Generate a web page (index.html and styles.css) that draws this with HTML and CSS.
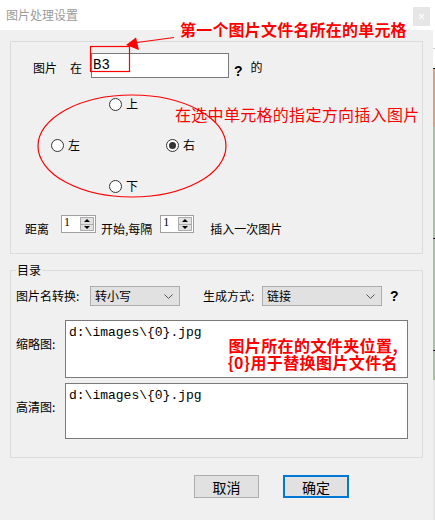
FILE: index.html
```html
<!DOCTYPE html>
<html>
<head>
    <title>图片处理设置</title>
    <link rel="stylesheet" href="styles.css">
</head>
<body>
    <div class="window">
        <div class="titlebar">
            <span class="title">图片处理设置</span>
            <span class="close">×</span>
        </div>

        <!-- 插入位置 -->
        <div class="group group-pos">
            <div class="pos-row">
                <span class="lbl lbl-pic">图片</span>
                <span class="lbl lbl-at">在</span>
                <div class="cell-input">B3</div>
                <span class="help">?</span>
                <span class="lbl lbl-of">的</span>
            </div>

            <div class="dir">
                <label class="radio dir-up"><span class="dot"></span>上</label>
                <label class="radio dir-left"><span class="dot"></span>左</label>
                <label class="radio dir-right"><span class="dot checked"></span>右</label>
                <label class="radio dir-down"><span class="dot"></span>下</label>
            </div>

            <div class="spin-row">
                <span class="lbl">距离</span>
                <div class="spin spin-a">
                    <span class="spin-val">1</span>
                    <span class="spin-btns"><i class="up"></i><i class="down"></i></span>
                </div>
                <span class="lbl lbl-start">开始,每隔</span>
                <div class="spin spin-b">
                    <span class="spin-val">1</span>
                    <span class="spin-btns"><i class="up"></i><i class="down"></i></span>
                </div>
                <span class="lbl lbl-once">插入一次图片</span>
            </div>
        </div>

        <!-- 目录 -->
        <fieldset class="group group-dir">
            <legend>目录</legend>
            <div class="sel-row">
                <span class="lbl lbl-conv">图片名转换:</span>
                <div class="select sel-case">转小写<svg class="chev" width="9" height="5"><polyline points="0.5,0.5 4.5,4.5 8.5,0.5" /></svg></div>
                <span class="lbl lbl-mode">生成方式:</span>
                <div class="select sel-mode">链接<svg class="chev" width="9" height="5"><polyline points="0.5,0.5 4.5,4.5 8.5,0.5" /></svg></div>
                <span class="help help-mode">?</span>
            </div>

            <div class="path-row">
                <span class="lbl path-lbl">缩略图:</span>
                <div class="path-box path-thumb">
                    d:\images\{0}.jpg
                    <div class="note note-path">图片所在的文件夹位置,<br>{0}用于替换图片文件名</div>
                </div>
            </div>

            <div class="path-row path-row-hd">
                <span class="lbl path-lbl">高清图:</span>
                <div class="path-box path-hd">d:\images\{0}.jpg</div>
            </div>
        </fieldset>

        <div class="buttons">
            <button class="btn">取消</button>
            <button class="btn btn-ok">确定</button>
        </div>

        <!-- red annotations -->
        <div class="note note-cell">第一个图片文件名所在的单元格</div>
        <div class="note note-dir">在选中单元格的指定方向插入图片</div>
        <svg class="marks" width="433" height="520">
            <rect x="90.5" y="46.5" width="39" height="25" />
            <line x1="174" y1="37.5" x2="137" y2="42.5" />
            <polygon class="head" points="126,45 136,37.5 139,50" />
            <ellipse cx="132" cy="146" rx="94" ry="51" />
        </svg>
    </div>
    <div class="strip"></div>
</body>
</html>
```

FILE: styles.css
```css
/* 图片处理设置 dialog */
body {
    margin: 0;
    display: flex;
    width: 435px;
    height: 520px;
    overflow: hidden;
    font-family: "Noto Sans CJK SC", sans-serif;
    font-size: 12px;
    color: #000;
}

.window {
    position: relative;
    width: 433px;
    height: 520px;
    background-color: #f0f0f0;
}

.strip {
    width: 2px;
    background: linear-gradient(to bottom,
        #fff 0 48px, #c8c8c8 48px 49px, #fff 49px 68px, #222 68px 69px,
        #d9a27c 69px 127px, #a7c39b 127px 238px, #222 238px 239px,
        #a7c39b 239px 350px, #222 350px 351px, #a7c39b 351px 380px,
        #e6e6e6 380px);
}

.titlebar {
    height: 30px;
    background-color: #fff;
    display: flex;
    align-items: center;
    justify-content: space-between;
    padding: 0 3px 0 6px;
}

.title {
    color: #9a9a9a;
    line-height: 14px;
}

.close {
    width: 17px;
    height: 19px;
    margin-top: 3px;
    background-color: #e6e6e6;
    color: #fff;
    font-family: "Liberation Sans", sans-serif;
    font-size: 12px;
    display: flex;
    align-items: center;
    justify-content: center;
}

.lbl {
    line-height: 14px;
    white-space: nowrap;
}

.help {
    font-family: "Liberation Sans", sans-serif;
    font-weight: bold;
    font-size: 14px;
    line-height: 14px;
}

.group {
    border: 1px solid #dcdcdc;
    margin: 0 10px;
}

/* ---- position group ---- */
.group-pos {
    margin-top: 11px;
    padding-bottom: 20px;
}

.pos-row {
    display: flex;
    align-items: flex-end;
    margin-top: 11px;
    padding-left: 22px;
}

.pos-row .lbl {
    margin-bottom: 3px;
}

.lbl-at {
    margin-left: 13px;
}

.cell-input {
    width: 135px;
    height: 23px;
    margin-left: 9px;
    border: 1px solid #7a7a7a;
    background-color: #fff;
    font-family: "Liberation Mono", monospace;
    font-size: 14px;
    line-height: 23px;
    padding-left: 1px;
}

.pos-row .help {
    margin-left: 5px;
    margin-bottom: 0;
}

.lbl-of {
    margin-left: 8px;
    align-self: flex-start;
    margin-top: 7px;
}

.dir {
    display: grid;
    grid-template-columns: 58px 57px auto;
    grid-template-rows: repeat(3, 14px);
    row-gap: 27px;
    margin: 19px 0 0 40px;
}

.radio {
    display: flex;
    align-items: center;
    gap: 4px;
    line-height: 14px;
}

.dir-up { grid-column: 2; grid-row: 1; }
.dir-left { grid-column: 1; grid-row: 2; }
.dir-right { grid-column: 3; grid-row: 2; }
.dir-down { grid-column: 2; grid-row: 3; }

.dot {
    width: 11px;
    height: 11px;
    border: 1px solid #333;
    border-radius: 50%;
    background-color: #fff;
    display: flex;
    align-items: center;
    justify-content: center;
}

.dot.checked::after {
    content: "";
    width: 7px;
    height: 7px;
    border-radius: 50%;
    background-color: #333;
}

.spin-row {
    display: flex;
    align-items: flex-end;
    margin-top: 22px;
    padding-left: 14px;
}

.spin-row .lbl {
    margin-bottom: -3px;
}

.spin {
    display: flex;
    height: 16px;
    border: 1px solid #a0a0a0;
    background-color: #fff;
    margin-left: 12px;
}

.spin-a {
    width: 33px;
}

.spin-b {
    width: 32px;
    margin-left: 8px;
}

.lbl-start {
    margin-left: 5px;
}

.lbl-once {
    margin-left: 16px;
}

.spin-val {
    flex: 1;
    font-family: "Liberation Serif", serif;
    font-size: 12px;
    line-height: 12px;
    padding-left: 2px;
}

.spin-btns {
    width: 12px;
    margin: 1px;
    border: 1px solid #adadad;
    background-color: #e1e1e1;
    display: flex;
    flex-direction: column;
}

.spin-btns i {
    flex: 1;
    display: flex;
    align-items: center;
    justify-content: center;
}

.spin-btns .up {
    border-bottom: 1px solid #adadad;
}

.spin-btns .up::after {
    content: "";
    border-left: 3px solid transparent;
    border-right: 3px solid transparent;
    border-bottom: 3px solid #000;
}

.spin-btns .down::after {
    content: "";
    border-left: 3px solid transparent;
    border-right: 3px solid transparent;
    border-top: 3px solid #000;
}

/* ---- directory group ---- */
.group-dir {
    margin-top: 9px;
    padding: 0 0 18px 0;
    min-width: 0;
}

.group-dir legend {
    margin-left: 5px;
    padding: 0 1px;
    line-height: 14px;
}

.sel-row {
    display: flex;
    align-items: center;
    margin-top: 9px;
    padding-left: 5px;
}

.lbl-conv {
    width: 74px;
}

.lbl-mode {
    margin-left: 23px;
    width: 59px;
}

.select {
    height: 18px;
    border: 1px solid #adadad;
    background-color: #e1e1e1;
    display: flex;
    align-items: center;
    justify-content: space-between;
    padding: 0 6px 0 4px;
    line-height: 14px;
}

.sel-case {
    width: 78px;
}

.sel-mode {
    width: 108px;
}

.chev {
    fill: none;
    stroke: #555;
    stroke-width: 1;
}

.help-mode {
    margin-left: 8px;
}

.path-row {
    display: flex;
    align-items: flex-start;
    margin-top: 14px;
    padding-left: 5px;
}

.path-row-hd {
    margin-top: 5px;
}

.path-lbl {
    width: 49px;
    margin-top: 17px;
}

.path-box {
    position: relative;
    width: 335px;
    border: 1px solid #7a7a7a;
    background-color: #fff;
    font-family: "Liberation Mono", monospace;
    font-size: 13px;
    line-height: 15px;
    padding: 4px 3px 0 3px;
}

.path-thumb {
    height: 52px;
}

.path-hd {
    height: 50px;
}

/* ---- buttons ---- */
.buttons {
    display: flex;
    gap: 24px;
    margin-top: 17px;
    padding-left: 194px;
}

.btn {
    width: 65px;
    height: 23px;
    border: 1px solid #adadad;
    background-color: #e1e1e1;
    font-family: "Noto Sans CJK SC", sans-serif;
    font-size: 14px;
    line-height: 14px;
    padding: 0;
}

.btn-ok {
    width: 66px;
    border: 2px solid #0078d7;
}

/* ---- red annotations ---- */
.note {
    position: absolute;
    color: #ff0000;
    font-size: 16px;
    line-height: 16px;
    white-space: nowrap;
}

.note-cell {
    left: 180px;
    top: 21px;
    font-weight: bold;
    letter-spacing: 0.2px;
}

.note-dir {
    left: 175px;
    top: 106px;
    letter-spacing: 0.3px;
}

.note-path {
    right: 9px;
    top: 16px;
    font-family: "Noto Sans CJK SC", sans-serif;
    font-weight: bold;
    line-height: 17px;
    text-align: right;
    letter-spacing: 0.4px;
}

.marks {
    position: absolute;
    left: 0;
    top: 0;
    pointer-events: none;
    fill: none;
    stroke: #ff0000;
    stroke-width: 1.2;
}

.marks .head {
    fill: #ff0000;
    stroke: none;
}
```
